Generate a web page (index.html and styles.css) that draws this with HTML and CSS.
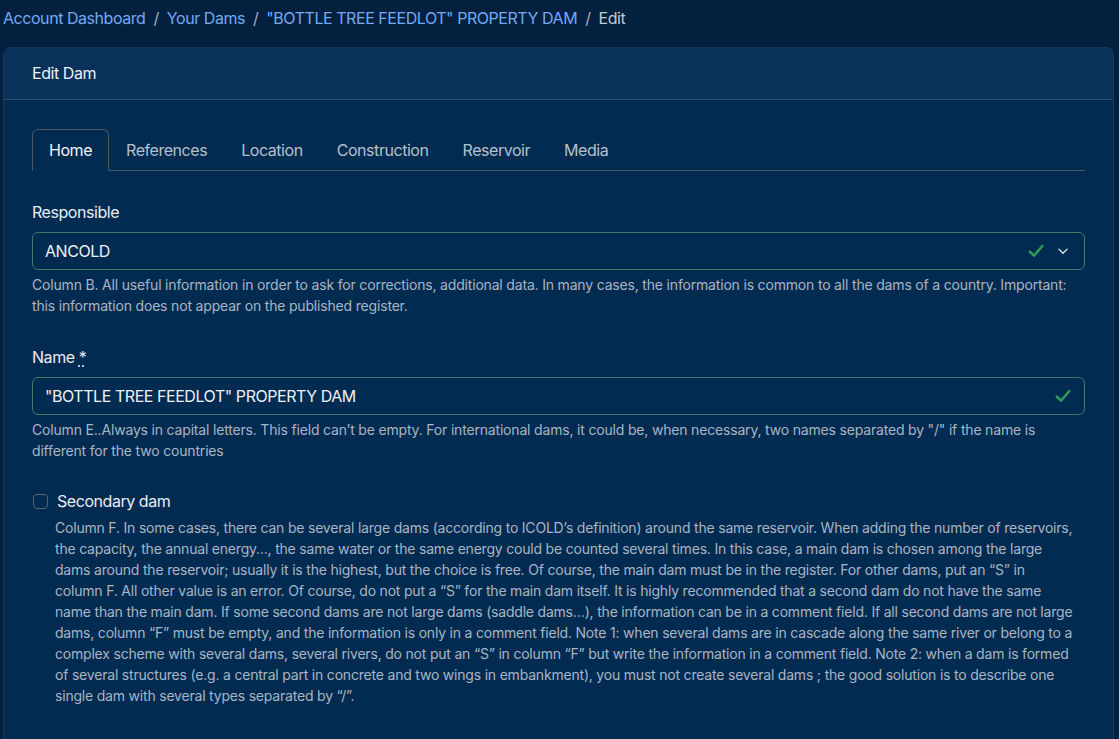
FILE: index.html
```html
<!DOCTYPE html>
<html lang="en">

<head>
	<meta charset="UTF-8">
	<meta name="viewport" content="width=device-width, initial-scale=1.0">
	<title>Edit Dam</title>
	<link rel="stylesheet" href="styles.css">
</head>

<body>
	<div class="page">
		<nav class="breadcrumb">
			<a href="#">Account Dashboard</a>
			<span class="sep">/</span>
			<a href="#">Your Dams</a>
			<span class="sep">/</span>
			<a href="#">"BOTTLE TREE FEEDLOT" PROPERTY DAM</a>
			<span class="sep">/</span>
			<span class="current">Edit</span>
		</nav>

		<div class="card">
			<div class="card-header">Edit Dam</div>
			<div class="card-body">
				<ul class="tabs">
					<li class="tab active">Home</li>
					<li class="tab">References</li>
					<li class="tab">Location</li>
					<li class="tab">Construction</li>
					<li class="tab">Reservoir</li>
					<li class="tab">Media</li>
				</ul>

				<div class="field">
					<label class="field-label">Responsible</label>
					<div class="control is-valid">
						<span class="control-value">ANCOLD</span>
						<svg class="icon-check" viewBox="0 0 16 16" width="18" height="18">
							<path d="M2.5 8.6 L6.2 12.2 L13.6 3.6" fill="none" stroke="#2f9e5b" stroke-width="2.2" stroke-linecap="round" stroke-linejoin="round"/>
						</svg>
						<svg class="icon-chevron" viewBox="0 0 16 16" width="12" height="12">
							<path d="M2.5 5.5 L8 11 L13.5 5.5" fill="none" stroke="#e4e8ee" stroke-width="1.8" stroke-linecap="round" stroke-linejoin="round"/>
						</svg>
					</div>
					<div class="help">Column B. All useful information in order to ask for corrections, additional data. In many cases, the information is common to all the dams of a country. Important: this information does not appear on the published register.</div>
				</div>

				<div class="field">
					<label class="field-label">Name <abbr title="required">*</abbr></label>
					<div class="control is-valid">
						<span class="control-value">"BOTTLE TREE FEEDLOT" PROPERTY DAM</span>
						<svg class="icon-check" viewBox="0 0 16 16" width="18" height="18">
							<path d="M2.5 8.6 L6.2 12.2 L13.6 3.6" fill="none" stroke="#2f9e5b" stroke-width="2.2" stroke-linecap="round" stroke-linejoin="round"/>
						</svg>
					</div>
					<div class="help">Column E..Always in capital letters. This field can’t be empty. For international dams, it could be, when necessary, two names separated by "/" if the name is different for the two countries</div>
				</div>

				<div class="field check-field">
					<div class="check-row">
						<span class="checkbox"></span>
						<label class="check-label">Secondary dam</label>
					</div>
					<div class="help check-help">Column F. In some cases, there can be several large dams (according to ICOLD’s definition) around the same reservoir. When adding the number of reservoirs,<br>
						the capacity, the annual energy…, the same water or the same energy could be counted several times. In this case, a main dam is chosen among the large<br>
						dams around the reservoir; usually it is the highest, but the choice is free. Of course, the main dam must be in the register. For other dams, put an “S” in<br>
						column F. All other value is an error. Of course, do not put a “S” for the main dam itself. It is highly recommended that a second dam do not have the same<br>
						name than the main dam. If some second dams are not large dams (saddle dams…), the information can be in a comment field. If all second dams are not large<br>
						dams, column “F” must be empty, and the information is only in a comment field. Note 1: when several dams are in cascade along the same river or belong to a<br>
						complex scheme with several dams, several rivers, do not put an “S” in column “F” but write the information in a comment field. Note 2: when a dam is formed<br>
						of several structures (e.g. a central part in concrete and two wings in embankment), you must not create several dams ; the good solution is to describe one<br>
						single dam with several types separated by “/”.</div>
				</div>
			</div>
		</div>
	</div>
</body>

</html>
```

FILE: styles.css
```css
* {
	margin: 0;
	padding: 0;
	box-sizing: border-box;
}

body {
	font-family: Inter, 'Noto Sans', sans-serif;
	font-size: 16px;
	line-height: 24px;
	letter-spacing: -0.028em;
	background: #03213f;
	color: #e6eaef;
	overflow: hidden;
}

.page {
	padding: 6px 5px 0 3px;
}

.breadcrumb {
	display: flex;
	align-items: center;
	gap: 8px;
	height: 24px;
	margin-bottom: 17px;
}

.breadcrumb a {
	color: #74a9f5;
	text-decoration: none;
}

.breadcrumb .sep {
	color: #a3afbd;
}

.breadcrumb .current {
	color: #c2cad4;
}

.card {
	background: #022b52;
	border: 1px solid #0f3961;
	border-radius: 8px;
	min-height: 800px;
	overflow: hidden;
}

.card-header {
	background: #09325b;
	border-bottom: 1px solid #2b4d70;
	padding: 13px 28px 14px;
	color: #eef1f5;
}

.card-body {
	padding: 29px 28px 0 28px;
}

.tabs {
	list-style: none;
	display: flex;
	border-bottom: 1px solid #4a5868;
	margin-bottom: 29px;
}

.tab {
	padding: 8px 16px;
	color: #b6c0cc;
	border: 1px solid transparent;
	border-radius: 6px 6px 0 0;
	margin-bottom: -1px;
}

.tab.active {
	color: #f4f6f9;
	background: #022b52;
	border-color: #4a5868 #4a5868 #022b52;
}

.field {
	margin-bottom: 29px;
}

.field-label {
	display: block;
	margin-bottom: 8px;
	color: #e9edf2;
}

.field-label abbr {
	text-decoration: underline dotted;
	text-underline-offset: 3px;
	cursor: help;
}

.control {
	display: flex;
	align-items: center;
	height: 38px;
	padding: 0 12px;
	border: 1px solid #3f7c6d;
	border-radius: 6px;
	background: #022b52;
}

.control-value {
	flex: 1;
	color: #eef1f5;
}

.icon-check {
	margin-left: 8px;
}

.icon-chevron {
	margin-left: 12px;
	margin-right: 3px;
}

.help {
	margin-top: 4px;
	font-size: 14px;
	line-height: 21px;
	letter-spacing: -0.18px;
	color: #a9b5c3;
}

.check-row {
	display: flex;
	align-items: center;
	gap: 9px;
	margin-top: -1px;
	margin-bottom: 1px;
}

.checkbox {
	width: 15px;
	height: 15px;
	margin-left: 1px;
	border: 1px solid #5b6672;
	border-radius: 4px;
}

.check-label {
	color: #e9edf2;
}

.check-help {
	padding-left: 23px;
	letter-spacing: -0.2px;
}
```
